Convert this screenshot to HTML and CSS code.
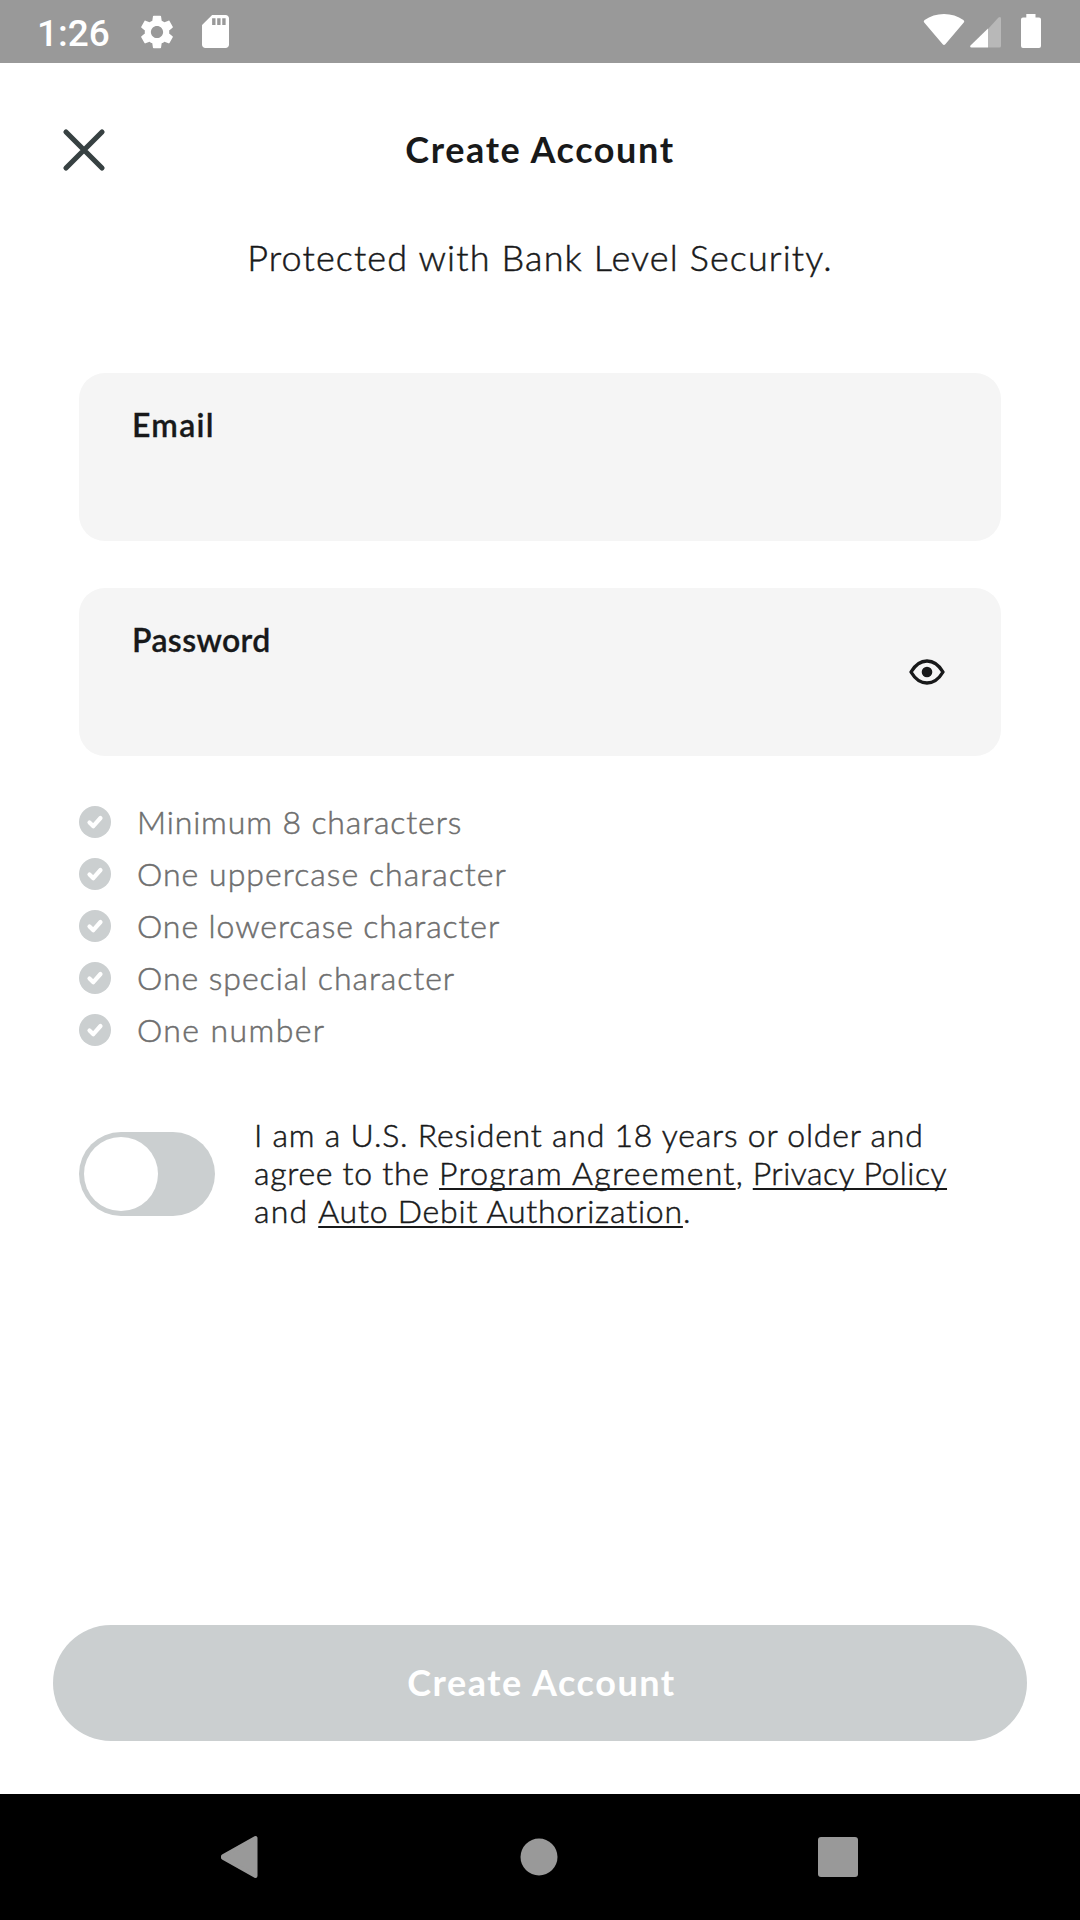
FILE: index.html
```html
<!DOCTYPE html>
<html lang="en">
<head>
<meta charset="utf-8">
<title>Create Account</title>
<link rel="stylesheet" href="styles.css">
</head>
<body>
<div class="screen">
  <div class="status-bar">
    <span class="clock">1:26</span>
    <svg class="gear" width="34" height="34" viewBox="2 2 20 20"><path fill="#fff" d="M19.14 12.94c.04-.3.06-.61.06-.94 0-.32-.02-.64-.07-.94l2.03-1.58c.18-.14.23-.41.12-.61l-1.92-3.32c-.12-.22-.37-.29-.59-.22l-2.39.96c-.5-.38-1.03-.7-1.62-.94l-.36-2.54c-.04-.24-.24-.41-.48-.41h-3.84c-.24 0-.43.17-.47.41l-.36 2.54c-.59.24-1.13.57-1.62.94l-2.39-.96c-.22-.08-.47 0-.59.22L2.74 8.87c-.12.21-.08.47.12.61l2.03 1.58c-.05.3-.09.63-.09.94s.02.64.07.94l-2.03 1.58c-.18.14-.23.41-.12.61l1.92 3.32c.12.22.37.29.59.22l2.39-.96c.5.38 1.03.7 1.62.94l.36 2.54c.05.24.24.41.48.41h3.84c.24 0 .44-.17.47-.41l.36-2.54c.59-.24 1.13-.56 1.62-.94l2.39.96c.22.08.47 0 .59-.22l1.92-3.32c.12-.22.07-.47-.12-.61l-2.01-1.58zM12 15.6c-1.98 0-3.6-1.62-3.6-3.6s1.62-3.6 3.6-3.6 3.6 1.62 3.6 3.6-1.62 3.6-3.6 3.6z"/></svg>
    <svg class="sd-card" width="27" height="33" viewBox="4 2 16 20" preserveAspectRatio="none"><path fill="#fff" d="M18 2h-8L4.020 8 4 20c0 1.100.9 2 2 2h12c1.100 0 2-.9 2-2V4c0-1.100-.9-2-2-2zm-6 6h-2V4h2v4zm3 0h-2V4h2v4zm3 0h-2V4h2v4z"/></svg>
    <svg class="wifi" width="42" height="34" viewBox="0 0 42 34"><path fill="#fff" d="M1.200 9.600Q0 8.200 1.600 7 10 1 21 1t19.400 6q1.600 1.200.4 2.600L22.300 31.200Q21 32.700 19.700 31.200Z"/></svg>
    <svg class="signal" width="32" height="32" viewBox="0 0 32 32"><path fill="#b8b8b8" d="M18 13 28.500 1.500Q31 0 31 2.500V30q0 1.500-1.500 1.500H18Z"/><path fill="#fff" d="M18 12.500V31.500H1.500Q-.5 31 .5 29.500Z"/></svg>
    <svg class="battery" width="20" height="34" viewBox="0 0 20 34"><path fill="#fff" d="M5.300 0h9.200v3.500h3.500q2 0 2 2V32q0 2-2 2H2q-2 0-2-2V5.500q0-2 2-2h3.300Z"/></svg>
  </div>

  <header class="header">
    <svg class="close" width="44" height="44" viewBox="0 0 44 44"><path d="M4 4 40 40M40 4 4 40" stroke="#374142" stroke-width="5.200" stroke-linecap="round"/></svg>
    <h1 class="title">Create Account</h1>
  </header>
  <p class="subtitle">Protected with Bank Level Security.</p>

  <main class="form">
    <div class="field"><span class="label label-email">Email</span></div>
    <div class="field">
      <span class="label label-password">Password</span>
      <svg class="eye" width="36" height="28" viewBox="0 0 36 28"><path d="M2 14Q8.500 3 18 3T34 14Q27.500 25 18 25T2 14Z" fill="none" stroke="#18191a" stroke-width="3.400" stroke-linejoin="round"/><circle cx="18" cy="14" r="5.300" fill="#18191a"/></svg>
    </div>
    <ul class="rules">
      <li class="rule"><svg class="check" viewBox="0 0 32 32"><circle cx="16" cy="16" r="16"/><path d="M10.500 16.500 14.300 20.200 21.500 12"/></svg><span class="rule-min">Minimum 8 characters</span></li>
      <li class="rule"><svg class="check" viewBox="0 0 32 32"><circle cx="16" cy="16" r="16"/><path d="M10.500 16.500 14.300 20.200 21.500 12"/></svg><span class="rule-upper">One uppercase character</span></li>
      <li class="rule"><svg class="check" viewBox="0 0 32 32"><circle cx="16" cy="16" r="16"/><path d="M10.500 16.500 14.300 20.200 21.500 12"/></svg><span class="rule-lower">One lowercase character</span></li>
      <li class="rule"><svg class="check" viewBox="0 0 32 32"><circle cx="16" cy="16" r="16"/><path d="M10.500 16.500 14.300 20.200 21.500 12"/></svg><span class="rule-special">One special character</span></li>
      <li class="rule"><svg class="check" viewBox="0 0 32 32"><circle cx="16" cy="16" r="16"/><path d="M10.500 16.500 14.300 20.200 21.500 12"/></svg><span class="rule-number">One number</span></li>
    </ul>
    <div class="consent">
      <div class="toggle"><div class="knob"></div></div>
      <p class="terms"><span class="t-resident">I am a U.S. Resident and 18 years or older and</span><br><span class="t-agree">agree to the </span><a class="link t-program">Program Agreement</a><span class="t-comma">, </span><a class="link t-privacy">Privacy Policy</a><br><span class="t-and">and </span><a class="link t-debit">Auto Debit Authorization</a>.</p>
    </div>
  </main>

  <button class="submit">Create Account</button>

  <nav class="nav">
    <svg width="40" height="44" viewBox="0 0 40 44"><path d="M4 21.200 36.500 3V41L4 22.800Z" fill="#999" stroke="#999" stroke-width="4" stroke-linejoin="round"/></svg>
    <svg width="38" height="38" viewBox="0 0 38 38"><circle cx="19" cy="19" r="18.500" fill="#999"/></svg>
    <svg width="40" height="40" viewBox="0 0 40 40"><rect width="40" height="40" rx="3" fill="#999"/></svg>
  </nav>
</div>
</body>
</html>
```
FILE: styles.css
```css
* { box-sizing: border-box; margin: 0; padding: 0; }
svg { display: block; flex: none; }

body {
  font-family: Lato, "Open Sans", sans-serif;
  font-weight: 300;
  color: #18191a;
  background: #fff;
}

.screen { display: flex; flex-direction: column; width: 1080px; height: 1920px; }

.status-bar {
  display: flex;
  align-items: center;
  height: 63px;
  padding: 0 39px 0 37px;
  background: #999;
}
.clock {
  width: 102px;
  padding-top: 4px;
  font: 500 37px/60px Roboto, sans-serif;
  color: #fff;
}
.gear { margin-left: 1px; }
.sd-card { margin-left: 28px; }
.wifi { margin-left: auto; margin-top: -4px; }
.signal { margin-left: 5px; }
.battery { margin-left: 19px; margin-top: -1px; }

.header {
  display: grid;
  grid-template-columns: 44px 1fr 44px;
  align-items: center;
  height: 44px;
  margin-top: 64px;
  padding: 0 62px;
}
.close { margin-top: -3px; }
.title {
  padding-bottom: 4px;
  font-size: 36px;
  line-height: 44px;
  font-weight: 700;
  text-align: center;
  letter-spacing: 1.6px;
}
.subtitle {
  margin-top: 64px;
  font-size: 36px;
  line-height: 44px;
  text-align: center;
  letter-spacing: 1.14px;
}
.subtitle, .rules, .terms { -webkit-text-stroke: 0.5px currentColor; }

.form { padding: 94px 79px 0; }
.field {
  display: flex;
  justify-content: space-between;
  height: 168px;
  margin-bottom: 47px;
  padding: 32px 56px 0 53px;
  border-radius: 26px;
  background: #f5f5f5;
}
.label {
  font-size: 32px;
  line-height: 40px;
  font-weight: 600;
  -webkit-text-stroke: 0.3px currentColor;
}
.label-email { letter-spacing: 1.3px; }
.label-password { letter-spacing: 0.35px; }
.eye { margin-top: 38px; }

.rules {
  margin-top: -7px;
  list-style: none;
  font-size: 32px;
  color: #6e6e6e;
}
.rule { display: flex; align-items: center; gap: 26px; height: 52px; line-height: 52px; }
.check { width: 32px; height: 32px; fill: #cbcfd0; -webkit-text-stroke: 0; }
.check path { fill: none; stroke: #fff; stroke-width: 4.2; stroke-linecap: round; stroke-linejoin: round; }
.rule-min { letter-spacing: 0.87px; }
.rule-upper { letter-spacing: 1.03px; }
.rule-lower { letter-spacing: 0.91px; }
.rule-special { letter-spacing: 0.96px; }
.rule-number { letter-spacing: 1.4px; }

.consent { display: flex; gap: 39px; margin-top: 60px; }
.toggle {
  width: 136px;
  height: 84px;
  margin-top: 16px;
  padding: 5px;
  border-radius: 42px;
  background: #cbcfd0;
}
.knob { width: 74px; height: 74px; border-radius: 50%; background: #fff; }
.terms { font-size: 32px; line-height: 38px; white-space: nowrap; }
.link {
  text-decoration: underline;
  text-decoration-thickness: 2px;
  text-underline-offset: 3px;
  text-decoration-skip-ink: none;
}
.t-resident { letter-spacing: 0.78px; }
.t-agree { letter-spacing: 0.72px; }
.t-program { letter-spacing: 1.3px; }
.t-comma { letter-spacing: 0.7px; }
.t-privacy { letter-spacing: 0.48px; }
.t-and { letter-spacing: 1.2px; }
.t-debit { letter-spacing: 0.79px; }

.submit {
  height: 116px;
  margin: auto 53px 53px;
  padding: 0 0 3px 3px;
  border: 0;
  border-radius: 58px;
  background: #cbcfd0;
  color: #fff;
  font: 700 36px/44px Lato, "Open Sans", sans-serif;
  letter-spacing: 1.55px;
}

.nav {
  display: grid;
  grid-template-columns: 40px 38px 40px;
  justify-content: space-between;
  align-items: center;
  height: 126px;
  padding: 0 222px 0 219px;
  background: #000;
}
```
